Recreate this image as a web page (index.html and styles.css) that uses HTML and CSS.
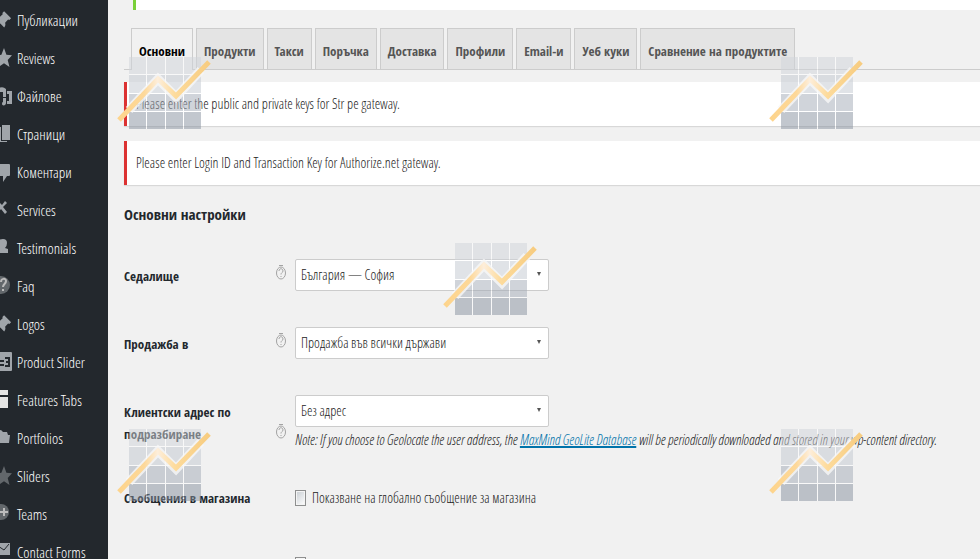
FILE: index.html
```html
<!DOCTYPE html>
<html lang="bg">
<head>
  <meta charset="utf-8">
  <title>Основни настройки</title>
  <link rel="stylesheet" href="styles.css">
</head>
<body>
  <svg class="defs" aria-hidden="true">
    <defs>
      <linearGradient id="line-fill" x1="0" x2="1" y1="0" y2="0">
        <stop offset="0" stop-color="#fdd48c"/>
        <stop offset=".28" stop-color="#fdd899"/>
        <stop offset=".43" stop-color="#fdeedb"/>
        <stop offset=".62" stop-color="#fddb9c"/>
        <stop offset="1" stop-color="#f7cc80"/>
      </linearGradient>
      <symbol id="chart" viewBox="0 0 94 75">
        <g opacity=".5">
          <path fill="#d1d5db" d="M12 2h17v17H12zM30 2h18v17H30zM49 2h17v17H49zM67 2h17v17H67z"/>
          <path fill="#c3c9d1" d="M12 20h17v18H12zM30 20h18v18H30zM49 20h17v18H49zM67 20h17v18H67z"/>
          <path fill="#a3abb7" d="M12 39h17v17H12zM30 39h18v17H30zM49 39h17v17H49zM67 39h17v17H67z"/>
          <path fill="#87919f" d="M12 57h17v17H12zM30 57h18v17H30zM49 57h17v17H49zM67 57h17v17H67z"/>
          <path fill="none" stroke="#fff" stroke-width="1" d="M12 19.500h72M12 38.500h72M12 56.500h72M29.500 2v72M48.500 2v72M66.500 2v72"/>
        </g>
        <path fill="none" stroke="#f8f8f8" stroke-width="9" opacity=".8" d="M12 55L41 24l18 18 25-27"/>
        <path fill="none" stroke="url(#line-fill)" stroke-width="5" d="M2 65L41 24l18 17L92 7"/>
      </symbol>
      <symbol id="pin" viewBox="0 0 20 20">
        <path d="M10.400 3l1.700-1.700 7 7-1.800 1.700-1.200-.4-3 3.100c.6 1.900.3 3.500-.9 4.700l-3.900-4L2 19l-1-1 5.500-6.200-3.700-3.700c1.300-1.200 2.800-1.500 4.700-.9l3.200-3z"/>
      </symbol>
      <symbol id="star" viewBox="0 0 20 20">
        <path d="M12 0l2.400 6.800 5.600.5-4.300 4.700L17.500 19 12 15.300 6.300 19l1.600-7L3 7.300l6.400-.5z"/>
      </symbol>
      <symbol id="help" viewBox="0 0 12 16">
        <g fill="none" stroke="#a3a3a3">
          <ellipse cx="6" cy="9" rx="4.500" ry="6"/>
          <path d="M4 1.500h4M4 7c0-3 4-3 4 0 0 1.500-2 1.500-2 3.500M6 12v1"/>
        </g>
      </symbol>
    </defs>
  </svg>

  <div class="page">
    <nav class="sidebar">
      <a href="#"><svg class="icon"><use href="#pin"/></svg>Публикации</a>
      <a href="#"><svg class="icon"><use href="#star"/></svg>Reviews</a>
      <a href="#"><svg class="icon" viewBox="0 0 20 20"><path d="M7 2q4-2 7 1v8h-3V6H7zM15 5h5v13h-5v-3h2V8h-2zM11 12h3v5c0 3-4 3-4 1s1-2 1-2z"/></svg>Файлове</a>
      <a href="#"><svg class="icon" viewBox="0 0 20 20"><path d="M10 1h8v15h-8zM2 3h7v14h6v1H2z"/></svg>Страници</a>
      <a href="#"><svg class="icon" viewBox="0 0 20 20"><path d="M3 2h14q1 0 1 1v10q0 1-1 1h-2l-4 6v-6H3z"/></svg>Коментари</a>
      <a href="#"><svg class="icon" viewBox="0 0 20 20"><path d="M13 1l2 2-4 4 4 5-2 2-4-5-5 6-2-2 6-6-5-5 2-2 5 5z"/></svg>Services</a>
      <a href="#"><svg class="icon" viewBox="0 0 20 20"><path d="M11 1q4 0 4 4 0 3-2 5l3 1v4H4v-4l4-1q-2-2-2-5 0-4 5-4z"/></svg>Testimonials</a>
      <a href="#"><svg class="icon dim" viewBox="0 0 20 20"><circle cx="9" cy="9" r="9"/><path class="mark-line" d="M9 6c0-4 5-4 5-1 0 3-3 3-3 6m0 2v2"/></svg>Faq</a>
      <a href="#"><svg class="icon"><use href="#pin"/></svg>Logos</a>
      <a href="#"><svg class="icon" viewBox="0 0 20 20"><path d="M1 0h18q1 0 1 1v17q0 1-1 1H1z"/><path class="cut-line" d="M6 9h6M6 13h6M13 6h4v8h-4M14 10h3"/></svg>Product Slider</a>
      <a href="#"><svg class="icon bright" viewBox="0 0 20 20"><path d="M2 0h14v5H2zM2 7h14v11H2z"/></svg>Features Tabs</a>
      <a href="#"><svg class="icon" viewBox="0 0 20 20"><path d="M2 4l7-2 2 2h4l1 3h2l-1 8H2z"/></svg>Portfolios</a>
      <a href="#"><svg class="icon dim"><use href="#star"/></svg>Sliders</a>
      <a href="#"><svg class="icon dim" viewBox="0 0 20 20"><circle cx="9" cy="8" r="8"/><path class="mark-line" d="M12 4v8M8 8h8"/></svg>Teams</a>
      <a href="#"><svg class="icon" viewBox="0 0 20 20"><path d="M2 1h16v12H2z"/><path class="cut-line thin" d="M3 2l9 6 5-6"/></svg>Contact Forms</a>
    </nav>

    <main class="content">
      <div class="notice-updated"></div>

      <div class="tabs">
        <a class="tab active" href="#">Основни</a>
        <a class="tab" href="#">Продукти</a>
        <a class="tab" href="#">Такси</a>
        <a class="tab" href="#">Поръчка</a>
        <a class="tab" href="#">Доставка</a>
        <a class="tab" href="#">Профили</a>
        <a class="tab" href="#">Email-и</a>
        <a class="tab" href="#">Уеб куки</a>
        <a class="tab" href="#">Сравнение на продуктите</a>
      </div>

      <div class="notice">Please enter the public and private keys for Str pe gateway.</div>
      <div class="notice">Please enter Login ID and Transaction Key for Authorize.net gateway.</div>

      <form>
        <h3>Основни настройки</h3>

        <div class="row">
          <label for="base">Седалище</label>
          <svg class="help"><use href="#help"/></svg>
          <div class="select">
            <select id="base"><option>България — София</option></select>
            <svg class="arrow" viewBox="0 0 4 4"><path d="M0 0h4L2 4z"/></svg>
          </div>
        </div>

        <div class="row">
          <label for="selling">Продажба в</label>
          <svg class="help"><use href="#help"/></svg>
          <div class="select">
            <select id="selling"><option>Продажба във всички държави</option></select>
            <svg class="arrow" viewBox="0 0 4 4"><path d="M0 0h4L2 4z"/></svg>
          </div>
        </div>

        <div class="row address">
          <label for="address">Клиентски адрес по подразбиране</label>
          <svg class="help"><use href="#help"/></svg>
          <div>
            <div class="select">
              <select id="address"><option>Без адрес</option></select>
              <svg class="arrow" viewBox="0 0 4 4"><path d="M0 0h4L2 4z"/></svg>
            </div>
            <p class="description">Note: If you choose to Geolocate the user address, the <a href="#">MaxMind GeoLite Database</a> will be periodically downloaded and stored in your wp-content directory.</p>
          </div>
        </div>

        <div class="row checks">
          <span class="title">Съобщения в магазина</span>
          <label class="check" for="notice"><input type="checkbox" id="notice">Показване на глобално съобщение за магазина</label>
        </div>

        <div class="row checks">
          <label class="check" for="api"><input type="checkbox" id="api" aria-label="API"></label>
        </div>
      </form>
    </main>

    <svg class="mark top left"><use href="#chart"/></svg>
    <svg class="mark top right"><use href="#chart"/></svg>
    <svg class="mark middle"><use href="#chart"/></svg>
    <svg class="mark bottom left"><use href="#chart"/></svg>
    <svg class="mark bottom right"><use href="#chart"/></svg>
  </div>
</body>
</html>
```

FILE: styles.css
```css
* {
  box-sizing: border-box;
}

body {
  margin: 0;
  background: #f1f1f1;
  color: #222;
  font-family: 'Open Sans Condensed Light', 'Open Sans Condensed', 'Roboto Condensed', sans-serif;
  font-size: 14px;
  font-weight: 300;
  line-height: 22px;
}

.defs {
  position: absolute;
  width: 0;
  height: 0;
}

.page {
  position: relative;
  display: flex;
  height: 100vh;
  overflow: hidden;
}

.sidebar {
  flex: 0 0 108px;
  min-width: 0;
  padding-top: 1px;
  background: #23282d;
}

.sidebar a {
  display: flex;
  align-items: center;
  gap: 5px;
  height: 38px;
  color: #fff;
  font-size: 15px;
  line-height: 16px;
  text-decoration: none;
  white-space: nowrap;
}

.icon {
  flex: none;
  width: 20px;
  height: 20px;
  margin-left: -8px;
  fill: #a0a5aa;
}

.icon.dim {
  fill: #62676b;
}

.icon.bright {
  fill: #e4e4e4;
}

.cut-line {
  fill: none;
  stroke: #23282d;
  stroke-width: 2;
}

.cut-line.thin {
  stroke-width: 1;
}

.mark-line {
  fill: none;
  stroke: #bbb;
  stroke-width: 2;
}

.content {
  flex: 1;
  min-width: 0;
  padding-left: 16px;
}

.notice-updated {
  height: 10px;
  margin-left: 9px;
  border-left: 3px solid #7ad03a;
  background: #fff;
}

.tabs {
  display: flex;
  gap: 3px;
  margin-top: 18px;
  padding-left: 7px;
  border-bottom: 1px solid #ccc;
}

.tab {
  height: 41px;
  padding: 12px 7px 0;
  border: 1px solid #ccc;
  border-bottom: 0;
  background: #e4e4e4;
  color: #555;
  font-family: 'Open Sans Condensed', 'Roboto Condensed', sans-serif;
  font-size: 13px;
  font-weight: bold;
  line-height: 20px;
  text-decoration: none;
  white-space: nowrap;
}

.tab.active {
  height: 42px;
  margin-bottom: -1px;
  background: #f1f1f1;
  color: #000;
}

.notice {
  margin-top: 12px;
  padding: 11px 9px;
  border-left: 3px solid #dc3232;
  background: #fff;
  box-shadow: 0 1px 1px rgba(0, 0, 0, .1);
}

.notice + .notice {
  margin-top: 15px;
}

h3 {
  margin: 18px 0 34px;
  color: #23282d;
  font-family: 'Open Sans Condensed', 'Roboto Condensed', sans-serif;
  font-size: 15px;
  line-height: 22px;
}

.row {
  display: grid;
  grid-template-columns: 151px 20px 1fr;
  margin-bottom: 36px;
}

.row > label,
.title {
  color: #23282d;
  font-family: 'Open Sans Condensed', 'Roboto Condensed', sans-serif;
  font-size: 13px;
  font-weight: bold;
}

.row > label {
  padding: 6px 20px 0 0;
}

.help {
  width: 12px;
  height: 16px;
  margin-top: 5px;
}

.address .help {
  margin-top: 28px;
}

.select {
  position: relative;
  width: 254px;
}

select {
  display: block;
  width: 100%;
  height: 32px;
  padding: 0 5px;
  appearance: none;
  border: 1px solid #ccc;
  border-radius: 2px;
  background: #fff;
  color: #222;
  font: inherit;
}

.arrow {
  position: absolute;
  top: 13px;
  right: 8px;
  width: 4px;
  height: 4px;
  fill: #555;
}

.description {
  margin: 2px 0 0;
  font-style: italic;
  white-space: nowrap;
}

.description a {
  color: #0073aa;
  text-decoration-thickness: 2px;
}

.checks {
  margin-bottom: 45px;
}

.row > .check {
  grid-column: 3;
  padding: 0;
  color: #222;
  font-family: inherit;
  font-size: 14px;
  font-weight: 300;
}

.title {
  white-space: nowrap;
}

.check input {
  width: 11px;
  height: 16px;
  margin: 0 6px 0 0;
  appearance: none;
  border: 1px solid #8e8f8f;
  background: linear-gradient(135deg, #c8cdd2, #fff);
  box-shadow: inset 0 0 0 1px #f4f4f4;
  vertical-align: -3px;
}

/* chart marks lying over the page */
.mark {
  position: absolute;
  width: 94px;
  height: 75px;
  pointer-events: none;
}

.mark.top {
  top: 55px;
}

.mark.middle {
  top: 241px;
  left: 443px;
}

.mark.bottom {
  top: 427px;
}

.mark.left {
  left: 117px;
}

.mark.right {
  left: 769px;
}
```
